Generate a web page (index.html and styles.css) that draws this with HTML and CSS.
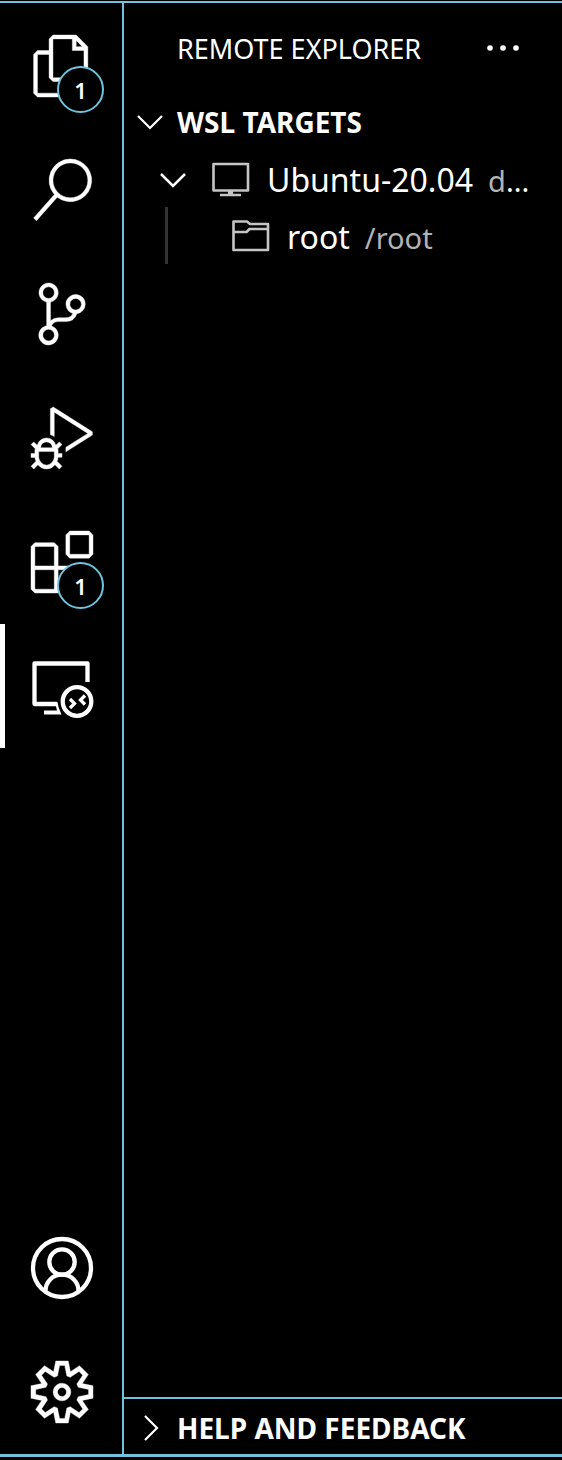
FILE: index.html
```html
<!DOCTYPE html>
<html lang="en">
<head>
<meta charset="utf-8">
<title>Remote Explorer</title>
<link rel="stylesheet" href="styles.css">
</head>
<body>
<div class="workbench">
  <nav class="activity-bar">
    <div class="activity-group">
      <button class="activity" aria-label="Explorer">
        <svg class="activity-icon glyph" viewBox="0 0 24 24"><path d="M17.5 0h-9L7 1.5V6H2.5L1 7.5v15.07L2.5 24h12.07L16 22.57V18h4.7l1.3-1.43V4.5L17.5 0zm0 2.12l2.38 2.38H17.5V2.12zm-3 20.38h-12v-15H7v9.07L8.5 18h6v4.5zm6-6h-12v-15H16V6h4.5v10.5z"/></svg>
        <span class="badge">1</span>
      </button>
      <button class="activity" aria-label="Search">
        <svg class="activity-icon glyph" viewBox="0 0 24 24"><path d="M15.25 0a8.25 8.25 0 0 0-6.18 13.72L1 22.88l1.12 1 8.05-9.12A8.251 8.251 0 1 0 15.25.01V0zm0 15a6.75 6.75 0 1 1 0-13.5 6.75 6.75 0 0 1 0 13.5z"/></svg>
      </button>
      <button class="activity" aria-label="Source Control">
        <svg class="activity-icon glyph" viewBox="0 0 24 24"><path d="M21.007 8.222A3.738 3.738 0 0 0 15.045 5.2a3.737 3.737 0 0 0 1.156 6.583 2.988 2.988 0 0 1-2.668 1.67h-2.99a4.456 4.456 0 0 0-2.989 1.165V7.4a3.737 3.737 0 1 0-1.494 0v9.117a3.776 3.776 0 1 0 1.816.099 2.99 2.99 0 0 1 2.668-1.667h2.99a4.484 4.484 0 0 0 4.223-3.039 3.736 3.736 0 0 0 3.25-3.687zM4.565 3.738a2.242 2.242 0 1 1 4.484 0 2.242 2.242 0 0 1-4.484 0zm4.484 16.441a2.242 2.242 0 1 1-4.484 0 2.242 2.242 0 0 1 4.484 0zm8.221-9.715a2.242 2.242 0 1 1 0-4.485 2.242 2.242 0 0 1 0 4.485z"/></svg>
      </button>
      <button class="activity" aria-label="Run and Debug">
        <svg class="activity-icon glyph" viewBox="0 0 24 24"><path d="M10.94 13.5l-1.32 1.32a3.73 3.73 0 0 0-7.24 0L1.06 13.5 0 14.56l1.72 1.72-.22.22V18H0v1.5h1.5v.08c.077.489.214.966.41 1.42L0 22.94 1.06 24l1.65-1.65A4.308 4.308 0 0 0 6 24a4.31 4.31 0 0 0 3.29-1.65L10.94 24 12 22.94 10.09 21c.198-.464.336-.951.41-1.45v-.1H12V18h-1.5v-1.5l-.22-.22L12 14.56l-1.06-1.06zM6 13.5a2.25 2.25 0 0 1 2.25 2.25h-4.5A2.25 2.25 0 0 1 6 13.5zm3 6a3.33 3.33 0 0 1-3 3 3.33 3.33 0 0 1-3-3v-2.25h6v2.25zm14.76-9.9v1.26L13.5 17.37V15.6l8.5-5.37L9 2v9.46a5.07 5.07 0 0 0-1.5-.72V.63L8.64 0l15.12 9.6z"/></svg>
      </button>
      <button class="activity" aria-label="Extensions">
        <svg class="activity-icon glyph" viewBox="0 0 24 24"><path fill-rule="evenodd" d="M13.5 1.5L15 0h7.5L24 1.5V9l-1.5 1.5H15L13.5 9V1.5zm1.5 0V9h7.5V1.5H15zM0 15V6l1.5-1.5H9L10.5 6v7.5H18l1.5 1.5v7.5L18 24H1.5L0 22.5V15zm9-1.5V6H1.5v7.5H9zM9 15H1.5v7.5H9V15zm1.5 7.5H18V15h-7.5v7.5z"/></svg>
        <span class="badge">1</span>
      </button>
      <button class="activity active" aria-label="Remote Explorer">
        <svg class="activity-icon line" viewBox="0 0 62 62">
          <path stroke-width="4.300" stroke-linejoin="round" d="M56.500 27V8.500H3.500V49H26"/>
          <path class="solid" d="M24 47h2.500l1 5 3 7.500H13v-4h13z"/>
          <circle stroke-width="4.300" cx="46" cy="46.500" r="14.300"/>
          <path stroke-width="3.300" d="M39 44l4.500 4.500L39 53M54 40.500L49.500 45l4.500 4.500"/>
        </svg>
      </button>
    </div>
    <div class="activity-group">
      <button class="activity" aria-label="Accounts">
        <svg class="activity-icon line" viewBox="0 0 62 62" stroke-width="4.300">
          <circle cx="31" cy="31" r="29"/>
          <circle cx="31" cy="25" r="12.700"/>
          <path d="M14.500 54c0-9 7-16.300 16.500-16.300S47.500 45 47.500 54"/>
        </svg>
      </button>
      <button class="activity" aria-label="Manage">
        <svg class="activity-icon glyph" viewBox="0 0 24 24"><path fill-rule="evenodd" d="M19.85 8.75l4.15.83v4.84l-4.15.83 2.35 3.52-3.43 3.43-3.52-2.35-.83 4.15H9.58l-.83-4.15-3.52 2.35-3.43-3.43 2.35-3.52L0 14.42V9.58l4.15-.83L1.8 5.23 5.23 1.8l3.52 2.35L9.58 0h4.84l.83 4.15 3.52-2.35 3.43 3.43-2.35 3.52zm-1.57 5.07l4-.81v-2l-4-.81-.54-1.3 2.29-3.43-1.43-1.43-3.43 2.29-1.3-.54-.81-4h-2l-.81 4-1.3.54-3.43-2.29-1.43 1.43L6.38 8.9l-.54 1.3-4 .81v2l4 .81.54 1.3-2.29 3.43 1.43 1.43 3.43-2.29 1.3.54.81 4h2l.81-4 1.3-.54 3.43 2.29 1.43-1.43-2.29-3.43.54-1.3zm-8.186-4.672A3.43 3.43 0 0 1 12 8.57 3.44 3.44 0 0 1 15.43 12a3.43 3.43 0 1 1-5.336-2.852zm.956 4.274c.281.188.612.288.95.288A1.7 1.7 0 0 0 13.71 12a1.71 1.71 0 1 0-2.66 1.422z"/></svg>
      </button>
    </div>
  </nav>
  <main class="side-bar">
    <header class="title-row">
      <h1 class="title">REMOTE EXPLORER</h1>
      <button class="more" aria-label="More Actions">
        <svg class="more-icon" viewBox="0 0 34 8"><circle cx="4" cy="4" r="2.800"/><circle cx="17" cy="4" r="2.800"/><circle cx="30" cy="4" r="2.800"/></svg>
      </button>
    </header>
    <section class="targets">
      <button class="section-head" aria-expanded="true">
        <svg class="chevron line" viewBox="0 0 28 28"><path stroke-width="2.200" d="M2 8l12 12L26 8"/></svg>
        <span>WSL TARGETS</span>
      </button>
      <div class="tree" role="tree">
        <div class="tree-row" role="treeitem" aria-expanded="true">
          <svg class="chevron line" viewBox="0 0 28 28"><path stroke-width="2.500" d="M2 9l12 12L26 9"/></svg>
          <svg class="tree-icon line" viewBox="0 0 38 38"><path stroke-width="2.600" stroke-linejoin="round" d="M1.500 4h34.500v26.500H1.500zM8 35h21"/><path stroke-width="5" d="M18.500 30v5"/></svg>
          <span class="name">Ubuntu-20.04</span>
          <span class="detail"><span class="dim">d</span>...</span>
        </div>
        <div class="tree-row child" role="treeitem">
          <svg class="tree-icon line" viewBox="0 0 38 38"><path stroke-width="2.600" stroke-linejoin="round" d="M1.500 4.500h13.500l3 2.500h18v26H1.500zM1.500 15h13l3-3H36"/></svg>
          <span class="name">root</span>
          <span class="detail dim">/root</span>
        </div>
      </div>
    </section>
    <section class="help">
      <button class="section-head" aria-expanded="false">
        <svg class="chevron line" viewBox="0 0 28 28"><path stroke-width="2.200" d="M9 2l12 12L9 26"/></svg>
        <span>HELP AND FEEDBACK</span>
      </button>
    </section>
  </main>
</div>
</body>
</html>
```
FILE: styles.css
```css
:root {
  --line: #6fc3df;
}

* {
  box-sizing: border-box;
}

body {
  margin: 0;
  padding: 1px 0 3px;
  background: #000;
  color: #fff;
  font-family: "Noto Sans", "Open Sans", sans-serif;
}

button {
  margin: 0;
  padding: 0;
  border: 0;
  background: none;
  color: inherit;
  font: inherit;
  text-align: left;
}

svg {
  display: block;
  flex: none;
  overflow: visible;
  fill: currentColor;
}

.glyph {
  stroke: currentColor;
  stroke-width: 0.15;
}

.line {
  fill: none;
  stroke: currentColor;
}

.solid {
  fill: currentColor;
  stroke: none;
}

.workbench {
  display: flex;
  min-height: calc(100vh - 4px);
  border-top: 2px solid var(--line);
  border-bottom: 3px solid var(--line);
}

.activity-bar {
  flex: none;
  display: flex;
  flex-direction: column;
  justify-content: space-between;
  width: 124px;
  padding-top: 1px;
  border-right: 2px solid var(--line);
}

.activity-group {
  display: flex;
  flex-direction: column;
}

.activity {
  position: relative;
  display: flex;
  align-items: center;
  height: 124px;
  padding-left: 31px;
}

.activity.active {
  padding-left: 26px;
  border-left: 5px solid #fff;
}

.activity-icon {
  width: 62px;
  height: 62px;
}

.badge {
  position: absolute;
  left: 57px;
  top: 62px;
  display: grid;
  place-items: center;
  width: 47px;
  height: 47px;
  border: 2px solid var(--line);
  border-radius: 50%;
  background: #000;
  font-size: 22px;
  font-weight: 600;
  line-height: 24px;
}

.side-bar {
  flex: 1;
  min-width: 0;
  display: flex;
  flex-direction: column;
}

.title-row {
  display: flex;
  align-items: center;
  justify-content: space-between;
  height: 91px;
  padding: 0 42px 0 53px;
}

.title {
  margin: 0;
  font-size: 27px;
  font-weight: 400;
  line-height: 36px;
}

.more {
  padding-bottom: 2px;
}

.more-icon {
  width: 34px;
  height: 8px;
}

.targets {
  flex: 1;
}

.section-head {
  display: flex;
  align-items: center;
  gap: 13px;
  width: 100%;
  height: 56px;
  padding-left: 12px;
  font-size: 28px;
  font-weight: 700;
  line-height: 36px;
}

.chevron {
  width: 28px;
  height: 28px;
}

.tree-row {
  display: flex;
  align-items: center;
  height: 57px;
  padding-left: 35px;
  white-space: nowrap;
}

.tree-row.child {
  margin-left: 41px;
  padding-left: 64px;
  border-left: 3px solid #333;
}

.tree-icon {
  width: 38px;
  height: 38px;
  color: #c5c5c5;
}

.chevron + .tree-icon {
  margin-left: 25px;
}

.name,
.detail {
  padding-top: 3px;
  line-height: 44px;
}

.name {
  margin-left: 17px;
  font-size: 32px;
}

.detail {
  margin-left: 15px;
  padding-top: 4px;
  font-size: 29px;
}

.dim {
  color: #b3b3b3;
}

.help {
  border-top: 2px solid var(--line);
}

.help .section-head {
  height: 55px;
  padding-top: 2px;
}
```
